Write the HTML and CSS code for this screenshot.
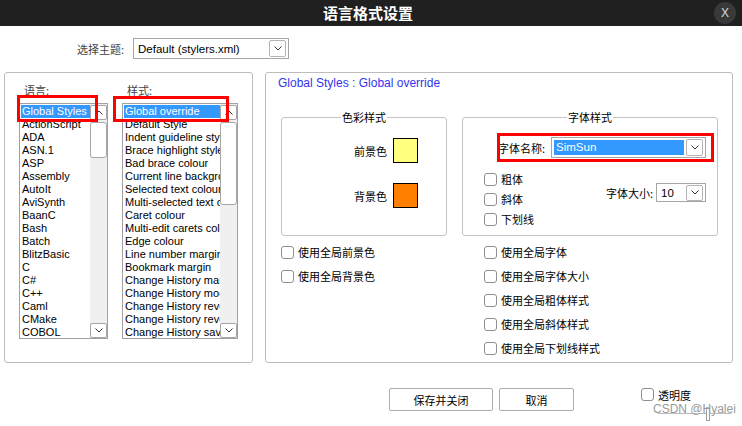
FILE: index.html
```html
<!DOCTYPE html>
<html lang="zh-CN">
<head>
<meta charset="utf-8">
<title>语言格式设置</title>
<link rel="stylesheet" href="styles.css">
</head>
<body>
<div class="window">
  <div class="titlebar">
    <span></span>
    <div class="title">语言格式设置</div>
    <div class="close-wrap"><span class="close">X</span></div>
  </div>

  <div class="theme-row">
    <span class="theme-label">选择主题:</span>
    <div class="select theme-select">
      <span class="sel-text">Default (stylers.xml)</span>
      <span class="dd"><svg width="8" height="5" viewBox="0 0 8 5"><path d="M0.5 0.5 L4 4 L7.5 0.5" fill="none" stroke="#333" stroke-width="1"/></svg></span>
    </div>
  </div>

  <div class="content">
    <div class="group left-group">
      <div class="col">
        <div class="col-label">语言:</div>
        <div class="listbox lb-lang">
          <div class="items">
            <div class="item sel">Global Styles</div>
            <div class="item">ActionScript</div>
            <div class="item">ADA</div>
            <div class="item">ASN.1</div>
            <div class="item">ASP</div>
            <div class="item">Assembly</div>
            <div class="item">AutoIt</div>
            <div class="item">AviSynth</div>
            <div class="item">BaanC</div>
            <div class="item">Bash</div>
            <div class="item">Batch</div>
            <div class="item">BlitzBasic</div>
            <div class="item">C</div>
            <div class="item">C#</div>
            <div class="item">C++</div>
            <div class="item">Caml</div>
            <div class="item">CMake</div>
            <div class="item">COBOL</div>
          </div>
          <div class="vscroll">
            <span class="sbtn"><svg width="8" height="5" viewBox="0 0 8 5"><path d="M0.5 4.5 L4 1 L7.5 4.5" fill="none" stroke="#333" stroke-width="1"/></svg></span>
            <span class="thumb thumb-lang"></span>
            <span class="sbtn down"><svg width="8" height="5" viewBox="0 0 8 5"><path d="M0.5 0.5 L4 4 L7.5 0.5" fill="none" stroke="#333" stroke-width="1"/></svg></span>
          </div>
          <span class="redmark red-lang"></span>
        </div>
      </div>
      <div class="col">
        <div class="col-label">样式:</div>
        <div class="listbox lb-style">
          <div class="items">
            <div class="item sel">Global override</div>
            <div class="item">Default Style</div>
            <div class="item">Indent guideline style</div>
            <div class="item">Brace highlight style</div>
            <div class="item">Bad brace colour</div>
            <div class="item">Current line background colour</div>
            <div class="item">Selected text colour</div>
            <div class="item">Multi-selected text colour</div>
            <div class="item">Caret colour</div>
            <div class="item">Multi-edit carets colour</div>
            <div class="item">Edge colour</div>
            <div class="item">Line number margin</div>
            <div class="item">Bookmark margin</div>
            <div class="item">Change History margin</div>
            <div class="item">Change History modified</div>
            <div class="item">Change History reverted to modified</div>
            <div class="item">Change History reverted to origin</div>
            <div class="item">Change History saved</div>
          </div>
          <div class="vscroll">
            <span class="sbtn"><svg width="8" height="5" viewBox="0 0 8 5"><path d="M0.5 4.5 L4 1 L7.5 4.5" fill="none" stroke="#333" stroke-width="1"/></svg></span>
            <span class="thumb thumb-style"></span>
            <span class="sbtn down"><svg width="8" height="5" viewBox="0 0 8 5"><path d="M0.5 0.5 L4 4 L7.5 0.5" fill="none" stroke="#333" stroke-width="1"/></svg></span>
          </div>
          <span class="redmark red-style"></span>
        </div>
      </div>
    </div>

    <div class="group right-group">
      <div class="style-title">Global Styles : Global override</div>
      <div class="boxes">
        <fieldset class="fs color-fs">
          <legend>色彩样式</legend>
          <div class="color-body">
            <div class="color-row"><span>前景色</span><span class="swatch fg"></span></div>
            <div class="color-row"><span>背景色</span><span class="swatch bg"></span></div>
          </div>
        </fieldset>
        <fieldset class="fs font-fs">
          <legend>字体样式</legend>
          <div class="font-body">
            <div class="name-row">
              <span class="name-label">字体名称:</span>
              <div class="select name-select">
                <span class="sel-text hl">SimSun</span>
                <span class="dd"><svg width="8" height="5" viewBox="0 0 8 5"><path d="M0.5 0.5 L4 4 L7.5 0.5" fill="none" stroke="#333" stroke-width="1"/></svg></span>
              </div>
              <span class="redmark red-font"></span>
            </div>
            <div class="opt-row">
              <div class="opt-col">
                <label class="chk"><span class="cb"></span>粗体</label>
                <label class="chk"><span class="cb"></span>斜体</label>
                <label class="chk"><span class="cb"></span>下划线</label>
              </div>
              <div class="size-part">
                <span class="size-label">字体大小:</span>
                <div class="select size-select">
                  <span class="sel-text">10</span>
                  <span class="dd"><svg width="8" height="5" viewBox="0 0 8 5"><path d="M0.5 0.5 L4 4 L7.5 0.5" fill="none" stroke="#333" stroke-width="1"/></svg></span>
                </div>
              </div>
            </div>
          </div>
        </fieldset>
      </div>
      <div class="checks">
        <div class="check-col left-col">
          <label class="chk row"><span class="cb"></span>使用全局前景色</label>
          <label class="chk row"><span class="cb"></span>使用全局背景色</label>
        </div>
        <div class="check-col">
          <label class="chk row"><span class="cb"></span>使用全局字体</label>
          <label class="chk row"><span class="cb"></span>使用全局字体大小</label>
          <label class="chk row"><span class="cb"></span>使用全局粗体样式</label>
          <label class="chk row"><span class="cb"></span>使用全局斜体样式</label>
          <label class="chk row"><span class="cb"></span>使用全局下划线样式</label>
        </div>
      </div>
    </div>
  </div>

  <div class="bottom">
    <button class="btn save">保存并关闭</button>
    <button class="btn cancel">取消</button>
    <label class="chk transp"><span class="cb"></span>透明度</label>
  </div>

  <div class="slider"><span class="slider-thumb"></span></div>
  <div class="watermark">CSDN @Hyalei</div>
</div>
</body>
</html>
```
FILE: styles.css
```css
* { box-sizing: border-box; }
html, body { margin: 0; padding: 0; }
body {
  width: 742px;
  height: 426px;
  overflow: hidden;
  background: #fff;
  font-family: "Liberation Sans", "Noto Sans CJK SC", sans-serif;
  font-size: 11px;
  color: #000;
}
.window {
  position: relative;
  width: 742px;
  height: 426px;
  display: flex;
  flex-direction: column;
}

/* title bar */
.titlebar {
  height: 26px;
  flex: none;
  background: #202020;
  display: grid;
  grid-template-columns: 1fr auto 1fr;
  align-items: center;
}
.title {
  color: #fff;
  font-family: "Noto Sans CJK SC", sans-serif;
  font-weight: 700;
  font-size: 15px;
  line-height: 26px;
  padding-right: 6px;
}
.close-wrap { display: flex; justify-content: flex-end; padding-right: 6px; }
.close {
  width: 22px; height: 22px;
  border-radius: 50%;
  background: #393939;
  color: #d8d8d8;
  font-size: 12px;
  display: flex; align-items: center; justify-content: center;
}

/* theme selector */
.theme-row {
  display: flex;
  align-items: center;
  margin-top: 12px;
  padding-left: 77px;
  height: 21px;
}
.theme-label {
  font-family: "Noto Sans CJK SC", sans-serif;
  color: #444;
  font-size: 11px;
  margin-right: 9px;
}
.select {
  display: flex;
  align-items: center;
  border: 1px solid #a6a6a6;
  background: #fff;
  padding: 0 2px 0 2px;
}
.theme-select { width: 156px; height: 21px; }
.sel-text { flex: 1; font-size: 11.5px; padding-left: 2px; white-space: nowrap; }
.dd {
  width: 17px; height: 17px;
  border: 1px solid #b4b4b4;
  border-radius: 2px;
  background: #fff;
  display: flex; align-items: center; justify-content: center;
  flex: none;
}

/* groups */
.content {
  display: flex;
  margin-top: 13px;
  padding-left: 4px;
  gap: 12px;
  height: 291px;
}
.group { border: 1px solid #bdbdbd; border-radius: 3px; }
.left-group {
  width: 249px;
  display: flex;
  gap: 14px;
  padding: 10px 0 0 14px;
}
.col-label {
  font-family: "Noto Sans CJK SC", sans-serif;
  color: #444;
  font-size: 11px;
  line-height: 14px;
  padding-left: 5px;
  margin-bottom: 6px;
}
.listbox {
  position: relative;
  display: flex;
  height: 236px;
  border: 1px solid #a0a0a0;
  background: #fff;
}
.lb-lang { width: 89px; }
.lb-style { width: 116px; }
.items { flex: 1; min-width: 0; padding: 1px 0 0 1px; overflow: hidden; }
.item {
  height: 13px;
  line-height: 13px;
  font-size: 11px;
  white-space: nowrap;
  overflow: hidden;
  padding-left: 1px;
}
.item.sel { background: #3399ff; color: #fff; }
.vscroll {
  width: 17px;
  flex: none;
  background: #f0f0f0;
  display: flex;
  flex-direction: column;
  padding: 1px 0 0 0;
}
.sbtn {
  height: 15px;
  border: 1px solid #a6a6a6;
  border-radius: 2px;
  background: #fff;
  display: flex; align-items: center; justify-content: center;
}
.sbtn.down { margin-top: auto; }
.thumb {
  margin-top: 2px;
  border: 1px solid #a6a6a6;
  border-radius: 3px;
  background: #fff;
}
.thumb-lang { height: 36px; }
.thumb-style { height: 83px; }

.redmark { position: absolute; border: 3px solid #f00; pointer-events: none; }
.red-lang { left: -3px; top: -9px; width: 81px; height: 27px; }
.red-style { left: -10px; top: -8px; width: 116px; height: 26px; }

/* right group */
.right-group {
  width: 468px;
  padding: 3px 14px 0 12px;
}
.style-title {
  color: #3434f0;
  font-size: 12px;
  line-height: 14px;
}
.boxes {
  display: flex;
  gap: 15px;
  margin-top: 20px;
  margin-left: 3px;
}
.fs {
  margin: 0;
  padding: 0;
  min-width: 0;
  border: 1px solid #c4c4c4;
  border-radius: 3px;
}
.fs legend {
  margin: 0 auto;
  padding: 0 1px;
  font-family: "Noto Sans CJK SC", sans-serif;
  font-size: 11px;
  line-height: 14px;
}
.color-fs { width: 166px; }
.font-fs { width: 256px; }
.color-body {
  display: flex;
  flex-direction: column;
  align-items: flex-end;
  gap: 20px;
  padding: 14px 28px 0 0;
}
.color-row {
  display: flex;
  align-items: center;
  gap: 6px;
  font-family: "Noto Sans CJK SC", sans-serif;
}
.swatch { width: 25px; height: 25px; border: 1px solid #000; }
.swatch.fg { background: #ffff80; }
.swatch.bg { background: #ff8000; }

.font-body { padding: 13px 11px 6px 21px; font-family: "Noto Sans CJK SC", "Liberation Sans", sans-serif; }
.name-row {
  position: relative;
  display: flex;
  align-items: center;
  padding-left: 14px;
  height: 21px;
}
.name-label { margin-right: 6px; }
.name-select { flex: 1; height: 21px; }
.sel-text.hl {
  background: #3399ff;
  color: #fff;
  font-family: "Liberation Sans", sans-serif;
  line-height: 15px;
  margin-right: 2px;
}
.red-font { left: 13px; top: -4px; width: 217px; height: 29px; }
.opt-row { display: flex; justify-content: space-between; margin-top: 11px; }
.opt-col { display: flex; flex-direction: column; }
.chk {
  display: flex;
  align-items: center;
  height: 20px;
  font-family: "Noto Sans CJK SC", sans-serif;
  font-size: 11px;
}
.cb {
  width: 13px; height: 13px;
  flex: none;
  border: 1px solid #8f8f8f;
  border-radius: 3px;
  background: #fff;
  margin-right: 4px;
}
.size-part { display: flex; align-items: center; margin-top: 14px; align-self: flex-start; }
.size-label { margin-right: 3px; }
.size-select { width: 50px; height: 19px; }
.size-select .dd { height: 16px; }
.size-select .sel-text { font-family: "Liberation Sans", sans-serif; }

.checks { display: flex; margin-top: 4px; margin-left: 3px; }
.left-col { width: 203px; }
.chk.row { height: 24px; }

/* bottom */
.bottom {
  display: flex;
  align-items: flex-start;
  margin-top: 25px;
  padding-left: 389px;
  gap: 6px;
}
.btn {
  height: 23px;
  border: 1px solid #adadad;
  border-radius: 2px;
  background: #fff;
  font-family: "Noto Sans CJK SC", sans-serif;
  font-size: 11px;
  color: #000;
  padding: 0;
  display: flex; align-items: center; justify-content: center;
}
.save { width: 104px; }
.cancel { width: 75px; }
.chk.transp { height: 13px; margin-left: 61px; }

.slider {
  position: absolute;
  left: 658px; top: 413px;
  width: 73px; height: 1px;
  background: #b5b5b5;
}
.slider-thumb {
  position: absolute;
  left: 48px; top: -6px;
  width: 4px; height: 14px;
  border: 1px solid #9a9a9a;
  background: #fff;
}
.watermark {
  position: absolute;
  left: 653px; top: 402px;
  font-family: "Liberation Sans", sans-serif;
  font-size: 12px;
  color: #9a9a9a;
  text-shadow: 0 0 2px #fff;
}
```
